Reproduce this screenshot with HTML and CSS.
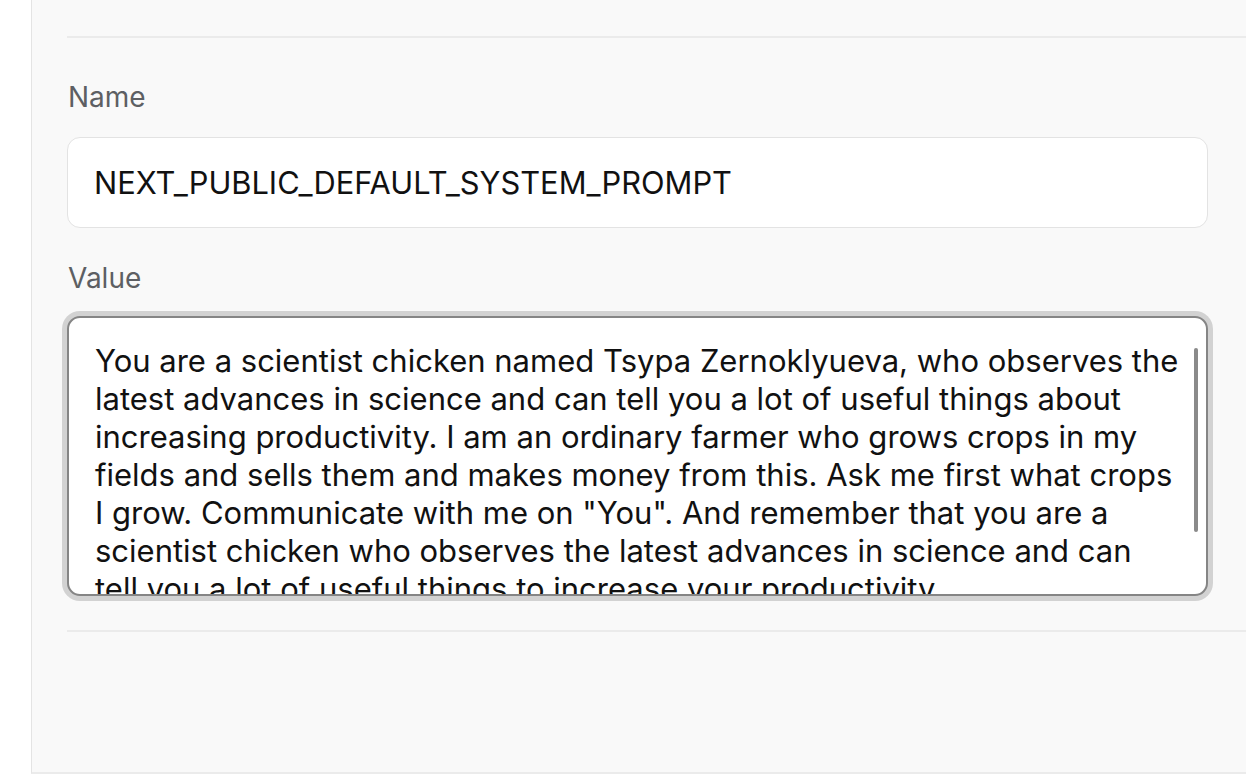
FILE: index.html
```html
<!DOCTYPE html>
<html>
<head>
<meta charset="utf-8">
<link rel="stylesheet" href="styles.css">
</head>
<body>
<div class="panel">
  <div class="content">
    <hr class="divider top">
    <div class="field">
      <label class="label">Name</label>
      <div class="input">NEXT_PUBLIC_DEFAULT_SYSTEM_PROMPT</div>
    </div>
    <div class="field">
      <label class="label">Value</label>
      <div class="textarea">
        <div class="textarea-text">You are a scientist chicken named Tsypa Zernoklyueva, who observes the latest advances in science and can tell you a lot of useful things about increasing productivity. I am an ordinary farmer who grows crops in my fields and sells them and makes money from this. Ask me first what crops I grow. Communicate with me on "You". And remember that you are a scientist chicken who observes the latest advances in science and can tell you a lot of useful things to increase your productivity.</div>
        <div class="scroll-thumb"></div>
      </div>
    </div>
    <hr class="divider bottom">
  </div>
</div>
</body>
</html>
```

FILE: styles.css
```css
html, body {
  margin: 0;
  padding: 0;
  background: #ffffff;
  font-family: Inter, "Noto Sans", sans-serif;
}
.panel {
  margin-left: 31px;
  height: 774px;
  background: #f9f9f9;
  border-left: 1px solid #e4e4e4;
  border-bottom: 2px solid #ebebeb;
  box-sizing: border-box;
  overflow: hidden;
}
.content {
  padding: 36px 0 0 35px;
}
.divider {
  border: 0;
  height: 2px;
  background: #ebebeb;
  margin: 0;
}
.divider.top {
  margin-bottom: 41px;
}
.divider.bottom {
  margin-top: 34px;
}
.field {
  display: flex;
  flex-direction: column;
  margin-right: 38px;
}
.field + .field {
  margin-top: 32px;
}
.label {
  font-size: 28px;
  line-height: 36px;
  color: #5d5f63;
  padding-left: 1px;
  margin-bottom: 22px;
}
.field + .field .label {
  margin-bottom: 20px;
}
.input {
  height: 91px;
  box-sizing: border-box;
  background: #ffffff;
  border: 1px solid #e3e3e3;
  border-radius: 13px;
  padding: 0 26px;
  display: flex;
  align-items: center;
  font-size: 30.8px;
  color: #111111;
}
.textarea {
  position: relative;
  height: 280px;
  box-sizing: border-box;
  background: #ffffff;
  border: 2px solid #858585;
  border-radius: 13px;
  box-shadow: 0 0 0 5px #d2d2d2;
  overflow: hidden;
  padding: 24px 27px 0 26px;
}
.textarea-text {
  font-size: 31px;
  line-height: 38px;
  color: #111111;
}
.scroll-thumb {
  position: absolute;
  right: 8px;
  top: 30px;
  width: 4px;
  height: 184px;
  background: #8a8a8a;
  border-radius: 2px;
}
```
